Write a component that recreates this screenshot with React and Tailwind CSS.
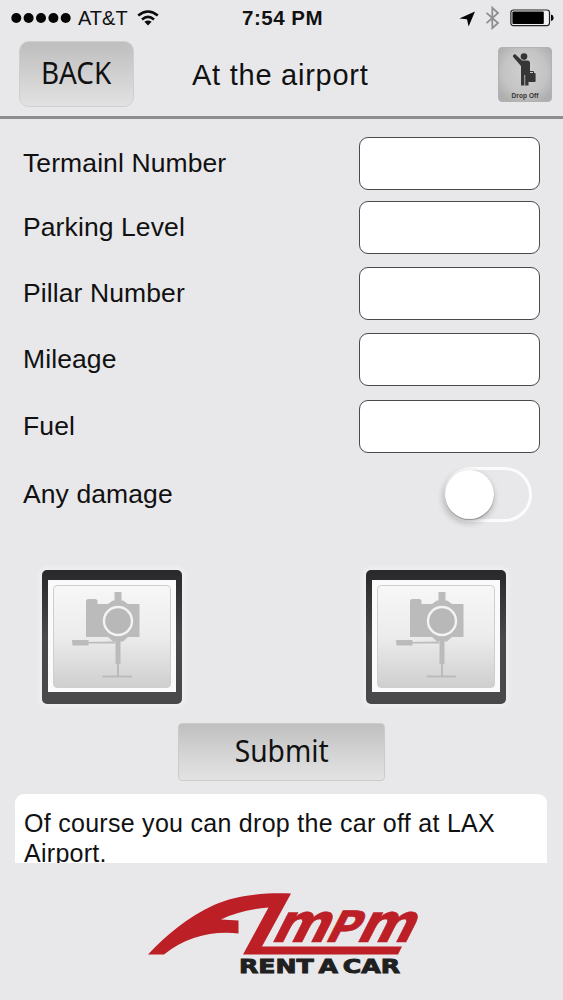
import React, { useState } from 'react';

const FIELDS = [
  { name: 'terminal', label: 'Termainl Number', spacing: 'mt-[18px]' },
  { name: 'parking', label: 'Parking Level', spacing: 'mt-[11px]' },
  { name: 'pillar', label: 'Pillar Number', spacing: 'mt-[13px]' },
  { name: 'mileage', label: 'Mileage', spacing: 'mt-[13px]' },
  { name: 'fuel', label: 'Fuel', spacing: 'mt-[14px]' },
];

const StatusBar = () => (
  <div className="grid grid-cols-3 items-center h-9 pl-[11px] pr-[9px]">
    <div className="flex items-center">
      <svg width="62" height="12" viewBox="0 0 62 12">
        {[5.3, 17.6, 30, 42.4, 54.7].map((cx) => (
          <circle key={cx} cx={cx} cy="6" r="5" fill="#050505" />
        ))}
      </svg>
      <span className="ml-[5px] text-[20px] leading-none">AT&amp;T</span>
      <svg className="ml-[9px]" width="22" height="16" viewBox="0 0 22 16" fill="none" stroke="#0a0a0a" strokeWidth="2.6">
        <path d="M1.2 5.4Q11 -2.4 20.8 5.4" />
        <path d="M5 9.4Q11 4.2 17 9.4" />
        <path d="M11 15.4L7.4 11.8Q11 9 14.6 11.8Z" fill="#0a0a0a" stroke="none" />
      </svg>
    </div>
    <div className="text-center text-[20.5px] leading-none font-bold tracking-[0.5px]">7:54 PM</div>
    <div className="flex items-center justify-end">
      <svg width="17" height="17" viewBox="0 0 17 17">
        <path d="M16 1.5L9.6 16.5L8 9.2L0.3 8.4Z" fill="#050505" />
      </svg>
      <svg className="ml-[9px]" width="15" height="24" viewBox="0 0 15 24" fill="none" stroke="#8e8e90" strokeWidth="1.8">
        <path d="M1.5 6.8L13 17L7.3 22.2V1.8L13 7L1.5 17.2" />
      </svg>
      <svg className="ml-[10px]" width="44" height="18" viewBox="0 0 44 18">
        <rect x="0.9" y="1" width="38.6" height="15.6" rx="2.5" fill="#f2f2f2" stroke="#222" strokeWidth="1.2" />
        <rect x="2.4" y="2.5" width="31.4" height="12.6" rx="1" fill="#000" />
        <path d="M41 5.5Q43.6 6 43.6 8.8T41 12Z" fill="#050505" />
      </svg>
    </div>
  </div>
);

const DropOffIcon = () => (
  <svg width="54" height="55" viewBox="0 0 54 55">
    <defs>
      <radialGradient id="dropGlow" cx="50%" cy="45%" r="62%">
        <stop offset="0" stopColor="#d0d0d1" />
        <stop offset="0.65" stopColor="#c4c4c5" />
        <stop offset="1" stopColor="#afafb0" />
      </radialGradient>
    </defs>
    <rect x="0.5" y="0.5" width="53" height="54" rx="3.5" fill="url(#dropGlow)" stroke="#b2b2b3" />
    <g fill="#363637">
      <circle cx="26" cy="9.6" r="3.3" />
      <path d="M15 8.2L17 7L24 13.6H30Q32 14 32 16V26H30.5V38.5H27.2V28H26.4V38.5H23V19L15 9.8Z" />
      <rect x="29.6" y="26" width="8" height="9" rx="1" />
    </g>
    <path d="M31.5 26V24.5H35.5V26" fill="none" stroke="#363637" />
    <text x="13.5" y="51" fontSize="6.5" fontWeight="bold" textLength="27" fill="#333" fontFamily="Liberation Sans, sans-serif">
      Drop Off
    </text>
  </svg>
);

const Header = () => (
  <header className="flex items-start h-[83px] pl-[19px] pr-[11px] pt-[5px] border-b-[3px] border-[#8c8c8d]">
    <button className="flex w-[115px] h-[66px] items-center justify-center rounded-[10px] border border-[#cfcfd0] bg-gradient-to-b from-[#bebebf] via-[#d0d0d1] to-[#e2e2e3] pb-[3px] font-['Noto_Sans',sans-serif] text-[31px]">
      <span className="inline-block scale-x-[0.9]">BACK</span>
    </button>
    <h1 className="ml-[58px] pt-[18px] text-[29px] leading-8 whitespace-nowrap tracking-[0.75px]">At the airport</h1>
    <div className="ml-auto pt-[6px]">
      <DropOffIcon />
    </div>
  </header>
);

const CameraButton = () => (
  <button className="w-[140px] h-[134px] rounded-[5px] bg-gradient-to-b from-[#29292b] via-[#49494b] to-[#49494b] px-[6px] pt-[10px] pb-[12px] shadow-[0_0_5px_3px_rgba(255,255,255,0.35)]">
    <div className="h-full bg-[#fafafa] px-[5px] pt-[5px] pb-[4px]">
      <div className="h-full rounded-[4px] border border-[#cfcfd0] bg-gradient-to-b from-[#f7f7f8] via-[#ececed] to-[#cfcfd0]">
        <svg className="block" width="116" height="101" viewBox="0 0 116 101">
          <g fill="#bbbbbc">
            <path d="M32 18V15.5Q32 13 34.5 13H41Q43.5 13 43.5 15.5V18H54L59 14.5H60.5V6H67.5V14.5H69L74 18H85.5V51H74L69 55.5H59L54 51H32Z" />
            <path d="M61.500 55H66.500V78H65V89.500H78V91.500H48.500V89.500H63V78H61.500Z" />
            <path d="M18 54H34.500V56L61 55.500V57.500H34.500V59.500H18.500Z" />
          </g>
          <circle cx="64" cy="35" r="14" fill="#b8b8b9" stroke="#f3f3f4" strokeWidth="2.4" />
        </svg>
      </div>
    </div>
  </button>
);

const Logo = () => (
  <svg className="block ml-[140px] overflow-visible" width="290" height="100" viewBox="0 0 290 100">
    <path
      d="M8 69.500C26 50 48 32 74 20C97 10 124 7.500 151 8.500L122 61.500H262L258 69.500H103L128.500 22.500C110 24 94 28 81 34.500L98.500 35.500V48.500C72 45.500 46 52 24 69.500Z"
      fill="#bd1f27"
    />
    <g transform="translate(0 57) skewX(-27)">
      <text
        fill="#bd1f27"
        stroke="#bd1f27"
        strokeWidth="0.6"
        strokeLinejoin="round"
        fontFamily="DejaVu Sans, sans-serif"
        fontWeight="bold"
      >
        <tspan x="129" fontSize="54">m</tspan>
        <tspan x="183" fontSize="43">P</tspan>
        <tspan x="214" fontSize="54">m</tspan>
      </text>
    </g>
    <text
      x="99"
      y="87.500"
      fontSize="19"
      fontWeight="bold"
      wordSpacing="-3"
      textLength="161"
      lengthAdjust="spacingAndGlyphs"
      fill="#202021"
      stroke="#202021"
      strokeWidth="0.9"
      fontFamily="DejaVu Sans, sans-serif"
    >
      RENT A CAR
    </text>
  </svg>
);

const App = () => {
  const [values, setValues] = useState({});
  const [damage, setDamage] = useState(false);

  const handleChange = (e) => setValues({ ...values, [e.target.name]: e.target.value });

  return (
    <div className="w-[563px] h-[1000px] overflow-hidden bg-[#e8e8ea] text-[#111112] font-['Liberation_Sans',Arial,sans-serif]">
      <StatusBar />
      <Header />

      <form onSubmit={(e) => e.preventDefault()}>
        {FIELDS.map((field) => (
          <label key={field.name} className={`flex items-center justify-between pl-[23px] pr-[23px] ${field.spacing}`}>
            <span className="pb-px text-[26.5px] leading-8 tracking-[0.1px]">{field.label}</span>
            <input
              name={field.name}
              value={values[field.name] || ''}
              onChange={handleChange}
              className="w-[181px] h-[53px] rounded-[9px] border border-[#4a4a4c] bg-white px-3 text-2xl"
            />
          </label>
        ))}

        <div className="flex items-center justify-between mt-[14px] pl-[23px] pr-[31px]">
          <span className="pb-px text-[26.5px] leading-8 tracking-[0.1px]">Any damage</span>
          <button
            type="button"
            onClick={() => setDamage(!damage)}
            className={`flex items-center w-[88px] h-[55px] rounded-full border-[3px] border-[#fbfbfb] ${damage ? 'justify-end' : 'justify-start'}`}
          >
            <span className="block w-[49px] h-[49px] -ml-[2px] rounded-full bg-white shadow-[-1px_3px_6px_1px_rgba(0,0,0,0.22),0_1px_1px_rgba(0,0,0,0.3)]" />
          </button>
        </div>

        <div className="flex justify-between mt-12 pl-[42px] pr-[57px]">
          <CameraButton />
          <CameraButton />
        </div>

        <button className="flex items-center justify-center w-[207px] h-[58px] mt-[19px] ml-[178px] pb-[4px] rounded-[4px] border border-[#cbcbcc] bg-gradient-to-b from-[#bfbfc0] via-[#d3d3d4] to-[#e3e3e4] font-['Noto_Sans',sans-serif] text-[31px]">
          <span className="inline-block scale-x-[0.91]">Submit</span>
        </button>
      </form>

      <div className="w-[532px] h-[69px] mt-[13px] ml-[15px] overflow-hidden rounded-t-[9px] bg-white pl-[9px] pr-4 pt-[14px] text-[25px] leading-[30px] tracking-[0.28px]">
        Of course you can drop the car off at LAX Airport.
      </div>

      <div className="mt-[22px]">
        <Logo />
      </div>
    </div>
  );
};

export default App;
